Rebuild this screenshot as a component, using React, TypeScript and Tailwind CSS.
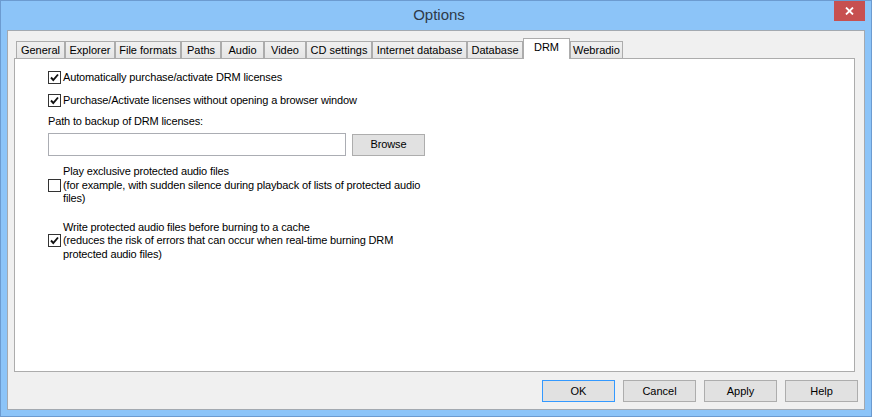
import React from "react";

const tabs = [
  { label: "General", w: "w-[49px]" },
  { label: "Explorer", w: "w-[50px]" },
  { label: "File formats", w: "w-[66px]" },
  { label: "Paths", w: "w-[40px]" },
  { label: "Audio", w: "w-[43px]" },
  { label: "Video", w: "w-[42px]" },
  { label: "CD settings", w: "w-[66px]" },
  { label: "Internet database", w: "w-[95px]" },
  { label: "Database", w: "w-[56px]" },
  { label: "DRM", w: "w-[47px]", active: true },
  { label: "Webradio", w: "w-[53px]" },
];

function CheckBox({ checked }: { checked?: boolean }) {
  return (
    <span className="w-[13px] h-[13px] shrink-0 border border-[#333333] bg-white flex items-center justify-center">
      {checked && (
        <svg width="9" height="9" viewBox="0 0 9 9">
          <path
            d="M1 4.5 L3.3 7 L8 1.5"
            fill="none"
            stroke="#111"
            strokeWidth="1.9"
          />
        </svg>
      )}
    </span>
  );
}

function WinButton({
  label,
  primary,
  className = "",
}: {
  label: string;
  primary?: boolean;
  className?: string;
}) {
  return (
    <button
      className={`w-[73px] h-[22px] bg-[#e1e1e1] border text-[11px] text-black flex items-center justify-center ${
        primary ? "border-[#3399ff]" : "border-[#adadad]"
      } ${className}`}
    >
      {label}
    </button>
  );
}

export default function App() {
  return (
    <div
      className="w-[872px] h-[417px] bg-[#8cc4f8] border border-[#6c9bd0] flex flex-col text-black"
      style={{ fontFamily: '"Liberation Sans", Arial, sans-serif' }}
    >
      {/* title bar */}
      <div className="relative h-[29px] flex items-center justify-center shrink-0">
        <span className="text-[15px] text-[#2e3a48] pl-[6px]">Options</span>
        <div className="absolute right-[6px] top-0 w-[31px] h-[20px] bg-[#c75050] flex items-center justify-center">
          <svg width="9" height="8" viewBox="0 0 9 8">
            <path d="M1 0.5 L8 7.5 M8 0.5 L1 7.5" stroke="#fff" strokeWidth="1.8" />
          </svg>
        </div>
      </div>

      {/* client area */}
      <div className="mx-[6px] flex-1 bg-[#f0f0f0] border border-[#a3a9b0] flex flex-col pl-[6px] pr-[9px] pt-[7px] pb-[7px]">
        {/* tab strip */}
        <div className="flex items-end h-[20px] pl-[2px] shrink-0">
          {tabs.map((t) =>
            t.active ? (
              <div
                key={t.label}
                className={`${t.w} h-[21px] -mb-px relative z-10 bg-white border-x border-t border-[#acacac] text-[11px] flex items-center justify-center pb-[3px]`}
              >
                {t.label}
              </div>
            ) : (
              <div
                key={t.label}
                className={`${t.w} h-[17px] bg-gradient-to-b from-[#f0f0f0] to-[#e5e5e5] border-x border-t border-[#acacac] text-[11px] flex items-center justify-center`}
              >
                {t.label}
              </div>
            )
          )}
        </div>

        {/* tab panel */}
        <div className="h-[314px] bg-white border border-[#acacac] pl-[33px] pt-[12px] text-[11px] tracking-[-0.15px] shrink-0">
          <div className="flex items-center h-[13px] gap-[2px]">
            <CheckBox checked />
            <span>Automatically purchase/activate DRM licenses</span>
          </div>
          <div className="flex items-center h-[13px] gap-[2px] mt-[10px]">
            <CheckBox checked />
            <span>Purchase/Activate licenses without opening a browser window</span>
          </div>
          <div className="h-[14px] leading-[14px] mt-[7px]">
            Path to backup of DRM licenses:
          </div>
          <div className="flex items-center gap-[6px] mt-[5px]">
            <div className="w-[298px] h-[23px] border border-[#abadb3] bg-white" />
            <WinButton label="Browse" className="h-[21px]" />
          </div>
          <div className="flex items-center gap-[2px] mt-[9px]">
            <CheckBox />
            <div className="leading-[13.5px]">
              Play exclusive protected audio files
              <br />
              (for example, with sudden silence during playback of lists of protected audio
              <br />
              files)
            </div>
          </div>
          <div className="flex items-center gap-[2px] mt-[15px]">
            <CheckBox checked />
            <div className="leading-[13.5px]">
              Write protected audio files before burning to a cache
              <br />
              (reduces the risk of errors that can occur when real-time burning DRM
              <br />
              protected audio files)
            </div>
          </div>
        </div>

        {/* buttons */}
        <div className="flex justify-end gap-[8px] mt-[8px] mr-[-3px]">
          <WinButton label="OK" primary />
          <WinButton label="Cancel" />
          <WinButton label="Apply" />
          <WinButton label="Help" />
        </div>
      </div>
      <div className="h-[6px] shrink-0" />
    </div>
  );
}
